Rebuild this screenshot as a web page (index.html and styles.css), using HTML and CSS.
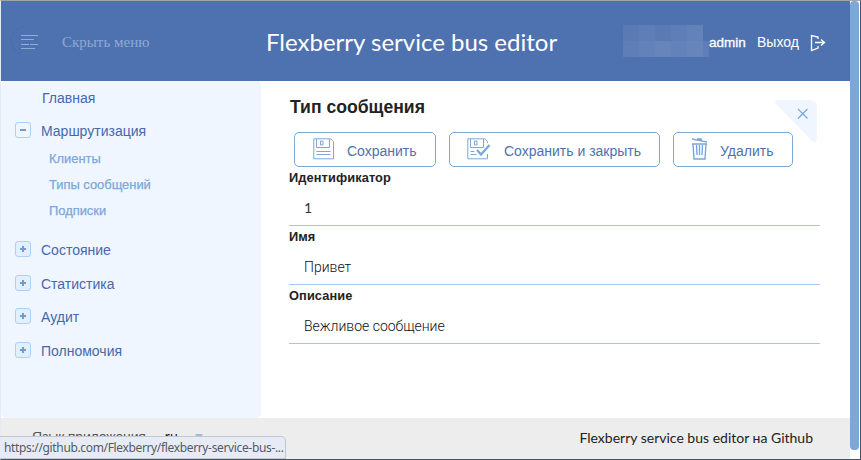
FILE: index.html
```html
<!DOCTYPE html>
<html lang="ru">
<head>
<meta charset="utf-8">
<title>Flexberry service bus editor</title>
<link rel="stylesheet" href="styles.css">
</head>
<body>
<div class="window">
  <div class="app">
    <header class="header">
      <div class="toggle">
        <svg class="burger" width="34" height="34" viewBox="0 0 34 34" fill="none"><path class="arc" d="M13 3C-2 7-3 24 11 31"/><path d="M11 11.500h17M11 15.500h13M11 20.500h8M20 20.500h8M11 24.500h14"/></svg>
        <span class="toggle-text">Скрыть меню</span>
      </div>
      <h1 class="title">Flexberry service bus editor</h1>
      <div class="user">
        <svg class="mosaic" width="86" height="32" viewBox="0 0 86 32" shape-rendering="crispEdges"><path fill="#5f7eb7" d="M0 0h80v16h6v16H0z"/><path fill="#5b7ab4" d="M32 0h16v16H32zM0 0h16v16H0z"/><path fill="#6382b9" d="M64 0h16v16H64zM16 16h16v16H16zM48 16h16v16H48z"/><path fill="#6784bb" d="M32 16h16v16H32zM64 16h16v16H64z"/></svg>
        <span class="name">admin</span>
        <a class="logout">Выход</a>
        <svg class="exit" width="16" height="18" viewBox="0 0 16 18" fill="none"><path d="M8 5V3L1.500 1.500v15L8 14v-2M5 8.500h9M11 5.500l3.500 3-3.500 3"/></svg>
      </div>
    </header>
    <div class="main">
      <nav class="sidebar">
        <div class="item home">Главная</div>
        <div class="item route"><i class="box minus"></i><span>Маршрутизация</span></div>
        <div class="sub">Клиенты</div>
        <div class="sub">Типы сообщений</div>
        <div class="sub">Подписки</div>
        <div class="item state"><i class="box"></i><span>Состояние</span></div>
        <div class="item stats"><i class="box"></i><span>Статистика</span></div>
        <div class="item audit"><i class="box"></i><span>Аудит</span></div>
        <div class="item perms"><i class="box"></i><span>Полномочия</span></div>
      </nav>
      <main class="content">
        <svg class="close" width="42" height="42" viewBox="0 0 42 42" fill="none"><path fill="#eff6ff" d="M2 0h33q7 0 7 7v32q0 5-5 2L1 4Q-1 0 2 0z"/><path stroke="#7ba7d9" stroke-width="1.200" d="M23 9l9.500 9.500M32.500 9L23 18.500"/></svg>
        <h2 class="heading">Тип сообщения</h2>
        <div class="buttons">
          <button class="btn save"><svg width="22" height="22" viewBox="0 0 22 22" fill="none"><path d="M.8.800h17l2.700 3v17H.8zM3.500 1v8.500h13V1M7.500 3h2.500v4H7.500zM3.500 13.500h14M3.500 16.500h14"/></svg><span>Сохранить</span></button>
          <button class="btn save-close"><svg width="24" height="22" viewBox="0 0 24 22" fill="none"><path d="M20.500 5V3.500L18 .800H.8v20h19.700V16M3.500 1v8.500h13V1M7.500 3h2.500v4H7.500zM3.500 13.500h4M3.500 16.500h6"/><path class="check" d="M10 12l4 4.500L22.500 7"/></svg><span>Сохранить и закрыть</span></button>
          <button class="btn remove"><svg width="17" height="22" viewBox="0 0 17 22" fill="none"><path stroke-width="1.600" d="M0 1l15 3M5 1h4l1 2"/><path stroke-width="1.400" d="M0 6h15M1 6l1 15h11l1-15M4.500 7l.5 10M7.500 7v10M10.500 7L10 17"/></svg><span>Удалить</span></button>
        </div>
        <div class="field"><label>Идентификатор</label><div class="value number">1</div></div>
        <div class="field"><label>Имя</label><div class="value">Привет</div></div>
        <div class="field"><label>Описание</label><div class="value">Вежливое сообщение</div></div>
      </main>
    </div>
    <footer class="footer">
      <div class="lang"><span class="lang-label">Язык приложения</span><span class="lang-value">ru</span><i class="caret"></i></div>
      <a class="github">Flexberry service bus editor на Github</a>
    </footer>
  </div>
  <div class="scroll"><div class="thumb"></div></div>
</div>
<div class="status">https://github.com/Flexberry/flexberry-service-bus-...</div>
</body>
</html>
```
FILE: styles.css
```css
* { box-sizing: border-box; }
body { margin: 0; font-family: "Liberation Sans", sans-serif; font-size: 14px; color: #222; white-space: nowrap; }
h1, h2 { margin: 0; }
.window { width: 861px; height: 460px; display: flex; border: 1px solid #465463; border-top-color: #a2a4a7; border-left-color: #e6eaf6; background: #fff; overflow: hidden; }
.app { width: 849px; display: flex; flex-direction: column; }
.header { height: 80px; background: #4e72b0; display: flex; color: #fff; }
.toggle { width: 265px; display: flex; align-items: flex-start; padding: 23px 0 0 9px; }
.burger { stroke: #91acd5; stroke-width: 1; margin-right: 18px; }
.arc { stroke: #4a6eac; }
.toggle-text { font: 15px/37px "Liberation Serif", serif; color: #8fa9d3; }
.title { font: 400 24px/82px Lato, sans-serif; width: 357px; }
.user { display: flex; align-items: flex-start; }
.mosaic { margin-top: 24px; }
.name { font: 500 13.5px/18px "Liberation Sans", sans-serif; margin-top: 33px; width: 48px; -webkit-text-stroke: .3px #fff; }
.logout { font: 14px/18px "Liberation Sans", sans-serif; margin-top: 32px; width: 53px; }
.exit { stroke: #fff; stroke-width: 1.3; margin-top: 33px; }
.main { height: 337px; display: flex; }
.sidebar { width: 260px; background: #eff6ff; border-radius: 5px; padding: 8px 0 0 14px; color: #4568ac; }
.item { display: flex; height: 20px; line-height: 18px; font-size: 14px; }
.item span { margin-left: 10px; }
.box { width: 16px; height: 16px; border: 1px solid #a9d0ff; border-radius: 3px; background: linear-gradient(#6f9cd1, #6f9cd1) center/6px 2px no-repeat, linear-gradient(#6f9cd1, #6f9cd1) center/2px 6px no-repeat, #e1efff; }
.minus { background: linear-gradient(#6f9cd1, #6f9cd1) center/6px 2px no-repeat; }
.home { padding-left: 27px; margin-bottom: 13px; }
.route { margin-bottom: 8px; }
.sub { height: 18px; line-height: 18px; font-size: 12.9px; color: #7ba7d9; margin: 0 0 8px 34px; -webkit-text-stroke: .25px #7ba7d9; }
.state { margin-top: 21px; }
.state, .perms { margin-bottom: 14px; }
.stats { margin-bottom: 13px; }
.audit { margin-bottom: 14px; }
.content { position: relative; width: 589px; padding: 15px 30px 0 28px; }
.close { position: absolute; right: 33px; top: 19px; }
.heading { font: 700 17.6px/22px "Liberation Sans", sans-serif; padding: 0 0 0 1px; height: 22px; color: #222; }
.buttons { display: flex; gap: 13px; margin: 14px 0 0 5px; height: 35px; }
.btn { height: 35px; border: 1px solid #7ba7d9; border-radius: 5px; background: #fff; color: #4e72b0; font: 14px/36px "Liberation Sans", sans-serif; padding: 0 0 0 18px; display: flex; align-items: flex-start; }
.btn svg { margin-top: 5px; stroke: #7ba7d9; flex: none; }
.btn span { height: 33px; line-height: 37px; }
.check { stroke-width: 2.2; }
.save { width: 142px; }
.save span { margin-left: 12px; }
.save-close { width: 211px; padding-left: 17px; }
.save-close span { margin-left: 13px; }
.remove { width: 120px; }
.remove span { margin-left: 11px; }
.field { height: 59px; border-bottom: 1px solid #a9c5e9; }
.field label { display: block; height: 20px; font: 700 12.8px/21px "Liberation Sans", sans-serif; letter-spacing: .1px; }
.value { font: 300 14px/22px Roboto, sans-serif; padding: 10px 0 0 15px; color: #111; }
.number { font-family: Lato, sans-serif; font-weight: 400; color: #333; }
.footer { height: 41px; background: #ededed; display: flex; justify-content: space-between; padding: 0 37px 0 31px; }
.lang { display: flex; padding-top: 10px; color: #555; line-height: 18px; }
.lang-label { letter-spacing: -.15px; }
.lang-value { font-family: Lato, sans-serif; margin: -1px 0 0 19px; color: #222; }
.caret { border: 4px solid transparent; border-top: 6px solid #9dbbe0; margin: 6px 0 0 17px; height: 10px; }
.github { font: 14px/40px Lato, "Liberation Sans", sans-serif; color: #222; }
.scroll { width: 10px; height: 458px; background: #fff; padding-right: 1px; }
.thumb { height: 449px; border-radius: 4px; background: #7ba7d9; }
.status { position: absolute; left: 0; top: 436px; width: 286px; height: 23px; border: 1px solid #c3c7cf; border-left: 0; border-radius: 0 5px 0 0; background: #e7ebf5; color: #555b62; font: 12px/22px "Noto Sans", sans-serif; letter-spacing: -.35px; padding-left: 4px; }
```
